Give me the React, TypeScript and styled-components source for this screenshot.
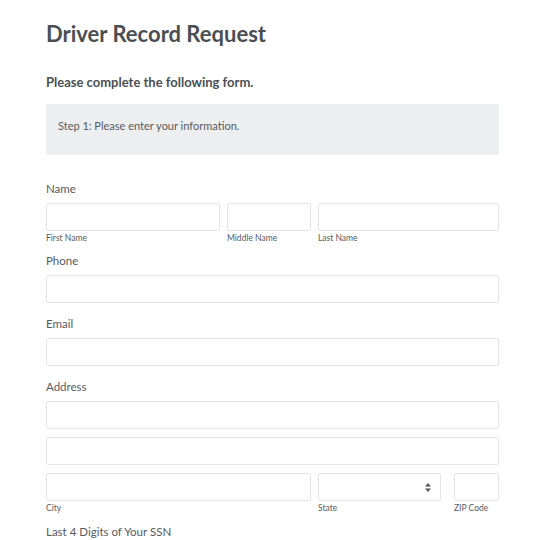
import styled, { createGlobalStyle } from "styled-components";

const GlobalStyle = createGlobalStyle`
  body {
    margin: 0;
    background: #ffffff;
    font-family: Lato, "Liberation Sans", sans-serif;
    color: #555a5f;
  }
`;

const Page = styled.div`
  width: 453px;
  padding: 20px 43px 0 46px;
  display: flex;
  flex-direction: column;
`;

const Title = styled.h1`
  margin: 0;
  font-size: 22px;
  font-weight: 700;
  color: #4b4f54;
  line-height: 28px;
`;

const Subtitle = styled.h3`
  margin: 26px 0 0;
  font-size: 13px;
  font-weight: 700;
  color: #4b4f54;
  line-height: 16px;
`;

const StepBox = styled.div`
  margin-top: 14px;
  height: 51px;
  box-sizing: border-box;
  padding: 15px 12px;
  background: #eceef0;
  font-size: 11px;
  color: #555a5f;
  line-height: 14px;
`;

const Fields = styled.div`
  margin-top: 27px;
  display: flex;
  flex-direction: column;
`;

const FieldGroup = styled.div<{ $gap?: number }>`
  display: flex;
  flex-direction: column;
  margin-bottom: ${p => p.$gap ?? 0}px;
`;

const Label = styled.label`
  font-size: 11.5px;
  line-height: 14px;
  color: #555a5f;
  margin-bottom: 7px;
`;

const Row = styled.div<{ $cols: string }>`
  display: grid;
  grid-template-columns: ${p => p.$cols};
  column-gap: 7px;
`;

const Cell = styled.div<{ $offset?: number }>`
  display: flex;
  flex-direction: column;
  margin-left: ${p => p.$offset ?? 0}px;
`;

const Input = styled.input`
  box-sizing: border-box;
  width: 100%;
  height: 28px;
  border: 1px solid #e3e5e7;
  border-radius: 2px;
  background: #fff;
  margin: 0;
  padding: 0 8px;
  font-family: inherit;
  outline: none;
`;

const SelectWrap = styled.div`
  position: relative;
  box-sizing: border-box;
  height: 28px;
  border: 1px solid #e3e5e7;
  border-radius: 2px;
  background: #fff;
`;

const Arrows = styled.svg`
  position: absolute;
  right: 9px;
  top: 9px;
`;

const SubLabel = styled.span`
  font-size: 8.5px;
  line-height: 10px;
  color: #555a5f;
  margin-top: 2px;
`;

const Stack = styled.div`
  display: flex;
  flex-direction: column;
  gap: 8px;
`;

export default function App() {
  return (
    <>
      <GlobalStyle />
      <Page>
        <Title>Driver Record Request</Title>
        <Subtitle>Please complete the following form.</Subtitle>
        <StepBox>Step 1: Please enter your information.</StepBox>
        <Fields>
          <FieldGroup $gap={11}>
            <Label>Name</Label>
            <Row $cols="174px 84px 1fr">
              <Cell>
                <Input />
                <SubLabel>First Name</SubLabel>
              </Cell>
              <Cell>
                <Input />
                <SubLabel>Middle Name</SubLabel>
              </Cell>
              <Cell>
                <Input />
                <SubLabel>Last Name</SubLabel>
              </Cell>
            </Row>
          </FieldGroup>
          <FieldGroup $gap={14}>
            <Label>Phone</Label>
            <Input />
          </FieldGroup>
          <FieldGroup $gap={14}>
            <Label>Email</Label>
            <Input />
          </FieldGroup>
          <FieldGroup $gap={12}>
            <Label>Address</Label>
            <Stack>
              <Input />
              <Input />
              <Row $cols="265px 123px 1fr">
                <Cell>
                  <Input />
                  <SubLabel>City</SubLabel>
                </Cell>
                <Cell>
                  <SelectWrap>
                    <Arrows width="6" height="9" viewBox="0 0 6 9">
                      <path d="M3 0 L6 3.5 H0 Z" fill="#555" />
                      <path d="M3 9 L6 5.5 H0 Z" fill="#555" />
                    </Arrows>
                  </SelectWrap>
                  <SubLabel>State</SubLabel>
                </Cell>
                <Cell $offset={6}>
                  <Input />
                  <SubLabel>ZIP Code</SubLabel>
                </Cell>
              </Row>
            </Stack>
          </FieldGroup>
          <FieldGroup>
            <Label>Last 4 Digits of Your SSN</Label>
          </FieldGroup>
        </Fields>
      </Page>
    </>
  );
}
